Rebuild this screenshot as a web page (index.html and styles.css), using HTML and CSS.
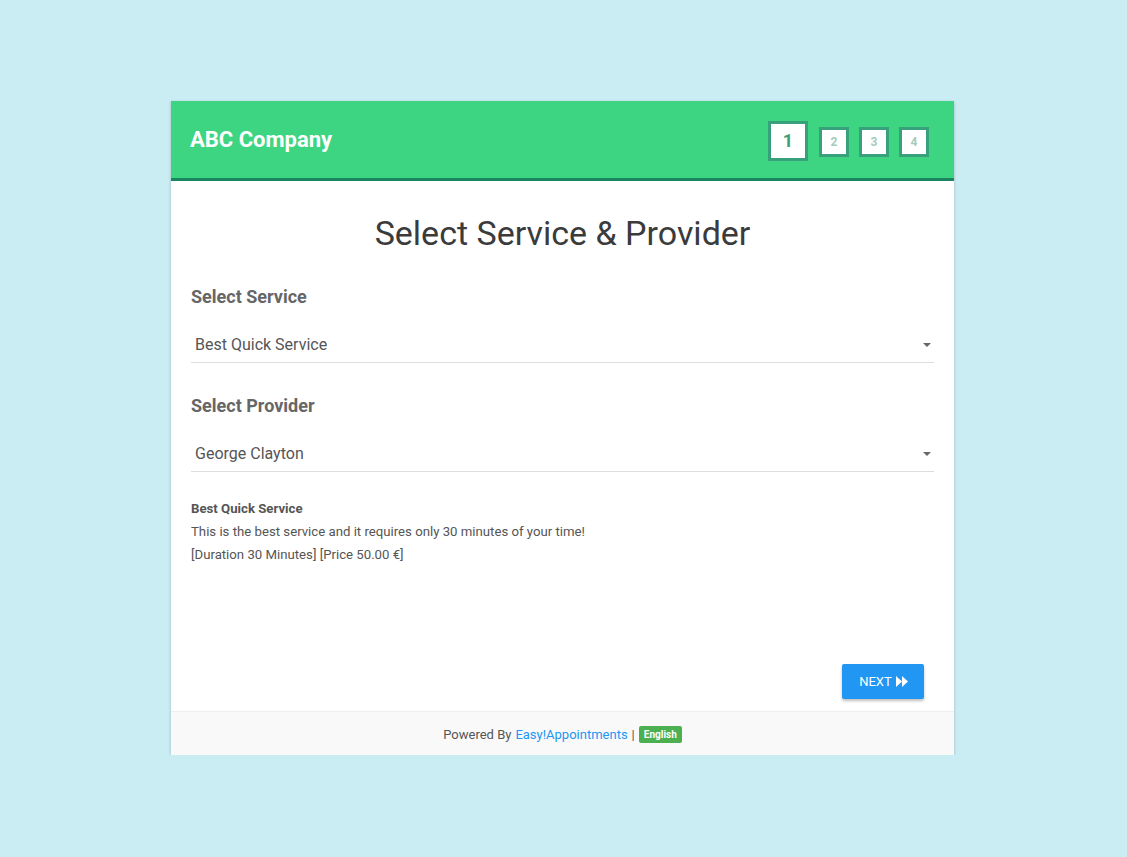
FILE: index.html
```html
<!DOCTYPE html>
<html lang="en">
<head>
  <meta charset="UTF-8" />
  <meta name="viewport" content="width=device-width, initial-scale=1" />
  <title>ABC Company - Book Appointment</title>
  <link rel="stylesheet" href="styles.css">
</head>
<body>
  <div class="book-frame">
    <div class="frame-header">
      <span class="company-name">ABC Company</span>
      <div class="steps">
        <div class="step step-active">1</div>
        <div class="step">2</div>
        <div class="step">3</div>
        <div class="step">4</div>
      </div>
    </div>

    <div class="frame-body">
      <h2 class="frame-title">Select Service &amp; Provider</h2>

      <label class="field-label">Select Service</label>
      <div class="select-box">
        <span>Best Quick Service</span>
        <span class="caret"></span>
      </div>

      <label class="field-label">Select Provider</label>
      <div class="select-box">
        <span>George Clayton</span>
        <span class="caret"></span>
      </div>

      <div class="service-info">
        <strong>Best Quick Service</strong>
        <p>This is the best service and it requires only 30 minutes of your time!</p>
        <p>[Duration 30 Minutes] [Price 50.00 €]</p>
      </div>

      <div class="command-row">
        <button type="button" class="btn-next">
          NEXT
          <svg width="12" height="11" viewBox="0 0 12 11" aria-hidden="true">
            <polygon points="0,0 6,5.5 0,11" fill="#fff" />
            <polygon points="6,0 12,5.5 6,11" fill="#fff" />
          </svg>
        </button>
      </div>
    </div>

    <div class="frame-footer">
      Powered By <a href="#">Easy!Appointments</a> | <span class="lang-badge">English</span>
    </div>
  </div>
</body>
</html>
```

FILE: styles.css
```css
* {
  box-sizing: border-box;
  margin: 0;
  padding: 0;
}

body {
  font-family: Roboto, 'Noto Sans', 'Liberation Sans', sans-serif;
  background-color: #caedf3;
  color: #666;
  padding: 101px 2px 0 0;
}

.book-frame {
  width: 783px;
  margin: 0 auto;
  background-color: #fff;
  box-shadow: 0 1px 3px rgba(0, 0, 0, 0.22);
}

.frame-header {
  height: 80px;
  background-color: #3dd581;
  border-bottom: 3px solid #1a865f;
  display: flex;
  align-items: center;
  justify-content: space-between;
  padding: 0 25px 0 19px;
}

.company-name {
  color: #fff;
  font-size: 22px;
  font-weight: 700;
}

.steps {
  display: flex;
  align-items: flex-start;
  gap: 10px;
  padding-top: 2px;
}

.step {
  width: 30px;
  height: 30px;
  margin-top: 6px;
  border: 3px solid #38a07a;
  background-color: #fff;
  color: #a3cbbd;
  font-size: 12px;
  font-weight: 700;
  display: flex;
  align-items: center;
  justify-content: center;
}

.step-active {
  width: 40px;
  height: 40px;
  margin-top: 0;
  margin-right: 1px;
  color: #38a07a;
  font-size: 18px;
}

.frame-body {
  height: 530px;
  padding: 30px 20px 12px;
  display: flex;
  flex-direction: column;
}

.frame-title {
  font-size: 34px;
  font-weight: 400;
  line-height: 44px;
  color: #3b3b3b;
  text-align: center;
  margin-bottom: 30px;
}

.field-label {
  display: block;
  font-size: 18px;
  font-weight: 700;
  line-height: 24px;
  margin-bottom: 17px;
}

.select-box {
  height: 37px;
  border-bottom: 1px solid #ddd;
  display: flex;
  align-items: center;
  justify-content: space-between;
  padding: 0 3px 0 4px;
  font-size: 16px;
  color: #555;
  margin-bottom: 31px;
}

.caret {
  width: 0;
  height: 0;
  border-left: 4px solid transparent;
  border-right: 4px solid transparent;
  border-top: 4px solid #666;
  margin-top: 1px;
}

.service-info {
  margin-top: -6px;
  font-size: 13.2px;
  line-height: 23px;
  color: #555;
}

.command-row {
  margin-top: auto;
  display: flex;
  justify-content: flex-end;
  padding-right: 10px;
}

.btn-next {
  width: 82px;
  height: 35px;
  background-color: #2196f3;
  color: #fff;
  border: none;
  border-radius: 2px;
  font-family: inherit;
  font-size: 13px;
  display: flex;
  align-items: center;
  justify-content: center;
  gap: 4px;
  padding-left: 1px;
  box-shadow: 0 2px 3px rgba(0, 0, 0, 0.25);
  cursor: pointer;
}

.frame-footer {
  height: 44px;
  border-top: 1px solid #eee;
  background-color: #f9f9f9;
  display: flex;
  align-items: center;
  justify-content: center;
  gap: 4px;
  font-size: 13px;
  color: #555;
  padding-top: 2px;
}

.frame-footer a {
  color: #2196f3;
  text-decoration: none;
}

.lang-badge {
  background-color: #4caf50;
  color: #fff;
  font-size: 10px;
  font-weight: 700;
  padding: 2px 5px;
  border-radius: 2px;
  line-height: 13px;
}
```
